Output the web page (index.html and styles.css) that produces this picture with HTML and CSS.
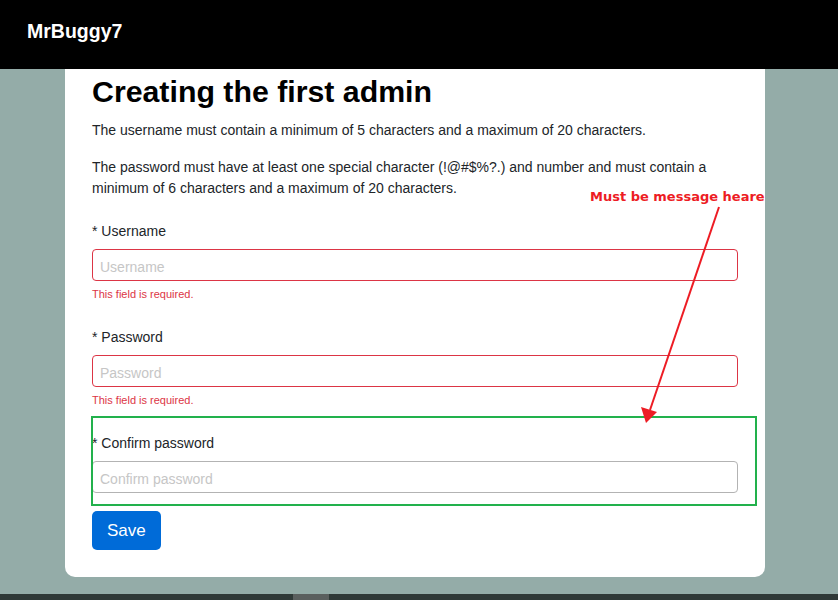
FILE: index.html
```html
<!DOCTYPE html>
<html lang="en">
<head>
<meta charset="utf-8">
<title>MrBuggy7</title>
<link rel="stylesheet" href="styles.css">
</head>
<body>
<header class="topbar"><span class="brand">MrBuggy7</span></header>
<main class="main">
  <section class="card">
    <h1 class="title">Creating the first admin</h1>
    <p class="text">The username must contain a minimum of 5 characters and a maximum of 20 characters.</p>
    <p class="text">The password must have at least one special character (!@#$%?.) and number and must contain a minimum of 6 characters and a maximum of 20 characters.</p>
    <form class="form">
      <div class="group">
        <label class="label">* Username</label>
        <input class="input input-error" type="text" placeholder="Username">
        <div class="error">This field is required.</div>
      </div>
      <div class="group">
        <label class="label">* Password</label>
        <input class="input input-error" type="password" placeholder="Password">
        <div class="error">This field is required.</div>
      </div>
      <div class="group group-confirm">
        <label class="label">* Confirm password</label>
        <input class="input" type="password" placeholder="Confirm password">
      </div>
      <button class="btn" type="button">Save</button>
    </form>
  </section>
</main>
<footer class="bottombar"><span class="thumb"></span></footer>
<div class="note">Must be message heare</div>
<svg class="arrow" width="838" height="600" viewBox="0 0 838 600">
  <line x1="719" y1="207" x2="650" y2="410" stroke="#ed1c24" stroke-width="2"/>
  <polygon points="646,423 641,407 657,412" fill="#ed1c24"/>
</svg>
</body>
</html>
```

FILE: styles.css
```css
* { box-sizing: border-box; }
html, body { margin: 0; padding: 0; }
body {
  position: relative;
  width: 838px;
  height: 600px;
  overflow: hidden;
  background: #94aca8;
  font-family: "Liberation Sans", Arial, sans-serif;
  color: #212529;
}
.topbar {
  height: 69px;
  background: #000;
  padding: 19px 0 0 27px;
}
.brand {
  display: block;
  color: #fff;
  font-weight: 700;
  font-size: 19.5px;
  line-height: 24px;
}
.main {
  padding: 0 0 17px 65px;
}
.card {
  width: 700px;
  background: #fff;
  border-radius: 0 0 10px 10px;
  padding: 5px 27px 27px;
}
.title {
  margin: 0;
  font-size: 30.3px;
  line-height: 36px;
  font-weight: 700;
  color: #000;
}
.text {
  margin: 10px 0 0;
  font-size: 14px;
  line-height: 21px;
}
.text + .text { margin-top: 16px; }
.form { margin-top: 21px; }
.group { margin-bottom: 24px; }
.label {
  display: block;
  font-size: 14px;
  line-height: 22px;
}
.input {
  display: block;
  width: 100%;
  height: 32px;
  margin-top: 7px;
  padding: 3px 7px 0;
  border: 1px solid #b3b3b3;
  border-radius: 4px;
  font-family: "Liberation Sans", Arial, sans-serif;
  font-size: 14px;
  color: #212529;
  background: #fff;
  outline: none;
}
.input::placeholder { color: #c6c6c6; }
.input-error { border-color: #dc3545; }
.error {
  margin-top: 5px;
  font-size: 11px;
  line-height: 16px;
  color: #dc3545;
}
.group-confirm {
  position: relative;
  margin-bottom: 18px;
}
.group-confirm::after {
  content: "";
  position: absolute;
  top: -16px;
  left: -1px;
  right: -19px;
  bottom: -13px;
  border: 2px solid #22b14c;
  pointer-events: none;
}
.btn {
  display: block;
  height: 39px;
  padding: 0 15px;
  border: 0;
  border-radius: 5px;
  background: #006bd8;
  color: #fff;
  font-family: "Liberation Sans", Arial, sans-serif;
  font-size: 17px;
}
.bottombar {
  height: 6px;
  background: #2f3937;
  padding-left: 293px;
}
.thumb {
  display: block;
  width: 36px;
  height: 6px;
  background: #5a5f5e;
}
.note {
  position: absolute;
  left: 590px;
  top: 188px;
  font-family: "DejaVu Sans", Verdana, sans-serif;
  font-weight: 700;
  font-size: 13px;
  line-height: 17px;
  color: #ed1c24;
  white-space: nowrap;
}
.arrow {
  position: absolute;
  left: 0;
  top: 0;
  pointer-events: none;
}
```
